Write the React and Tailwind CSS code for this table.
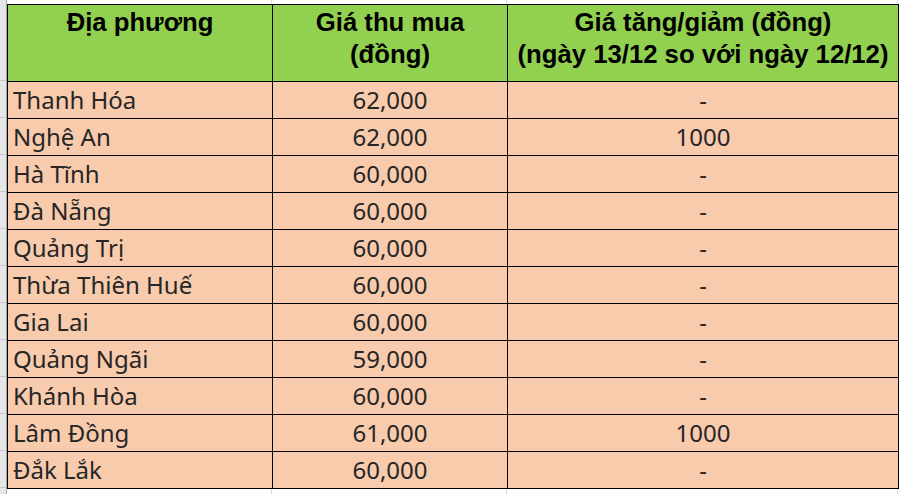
const rows = [
  ['Thanh Hóa', '62,000', '-'],
  ['Nghệ An', '62,000', '1000'],
  ['Hà Tĩnh', '60,000', '-'],
  ['Đà Nẵng', '60,000', '-'],
  ['Quảng Trị', '60,000', '-'],
  ['Thừa Thiên Huế', '60,000', '-'],
  ['Gia Lai', '60,000', '-'],
  ['Quảng Ngãi', '59,000', '-'],
  ['Khánh Hòa', '60,000', '-'],
  ['Lâm Đồng', '61,000', '1000'],
  ['Đắk Lắk', '60,000', '-'],
];

const cols = 'grid grid-cols-[265px_235px_391px]';

function GridGap({ h }) {
  return (
    <div className={`${cols} ${h}`}>
      <div className="border-r border-[#d9d9d9]" />
      <div className="border-r border-[#d9d9d9]" />
      <div className="border-r border-[#d9d9d9]" />
    </div>
  );
}

export default function App() {
  const head = 'bg-[#92d050] border-r border-b border-black text-center text-black font-bold text-[25.7px] leading-[32px] pt-[1px] h-[77px] whitespace-nowrap';
  const cell = 'bg-[#f8cbad] border-r border-b border-black h-[37px] text-[24px] leading-[36px] text-[#262626]';

  return (
    <div className="flex w-[900px] h-[494px] bg-white overflow-hidden">
      {/* row header strip */}
      <div className="w-[7px] shrink-0 bg-[#e6e6e6] border-r border-[#a6a6a6] flex flex-col">
        <div className="h-[81px] border-b border-[#c8c8c8]" />
        {rows.map((r) => (
          <div key={r[0]} className="h-[37px] border-b border-[#c8c8c8]" />
        ))}
      </div>

      <div className="flex flex-col">
        <GridGap h="h-[4px]" />

        <div className={`${cols} border-l border-t border-black font-['Liberation_Sans',Arial,sans-serif]`}>
          <div className={head}>Địa phương</div>
          <div className={head}>
            Giá thu mua
            <br />
            (đồng)
          </div>
          <div className={head}>
            Giá tăng/giảm (đồng)
            <br />
            (ngày 13/12 so với ngày 12/12)
          </div>

          {rows.map(([name, price, diff]) => (
            <div key={name} className="contents font-['Noto_Sans',sans-serif]">
              <div className={`${cell} pl-[5px] whitespace-nowrap`}>{name}</div>
              <div className={`${cell} text-center`}>{price}</div>
              <div className={`${cell} text-center`}>{diff}</div>
            </div>
          ))}
        </div>

        <GridGap h="h-[6px]" />
      </div>
    </div>
  );
}
